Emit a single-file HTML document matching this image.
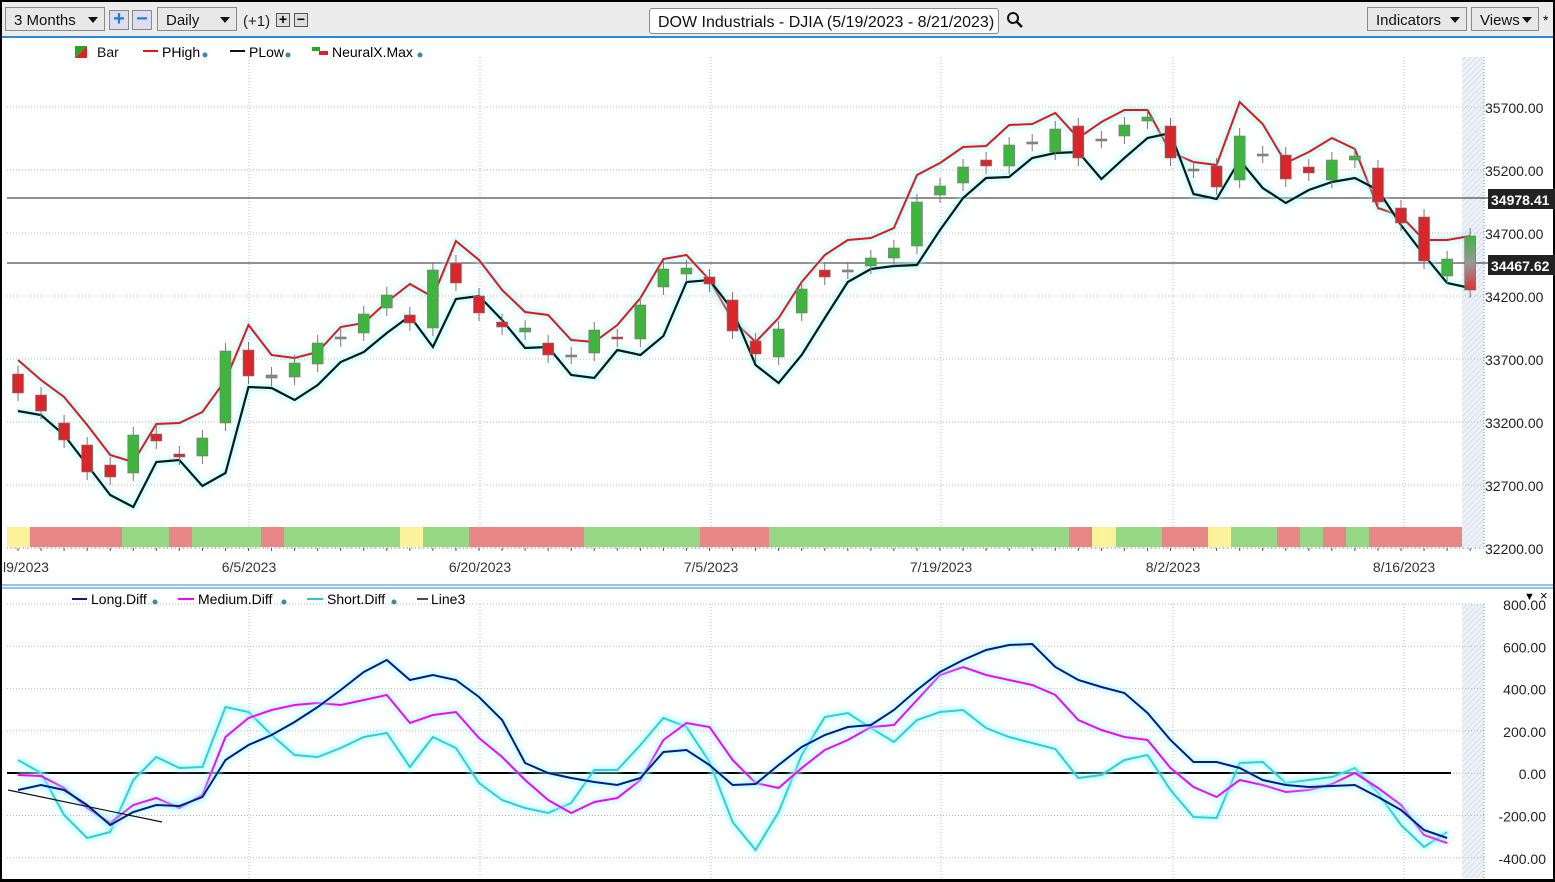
<!DOCTYPE html>
<html><head><meta charset="utf-8"><style>
*{margin:0;padding:0;box-sizing:border-box}
body{width:1555px;height:882px;background:#000;overflow:hidden;font-family:"Liberation Sans",sans-serif;position:relative}
#w{position:absolute;left:2px;top:2px;width:1551px;height:877px;background:#fff}
#tb{position:absolute;left:0;top:0;width:1551px;height:36px;background:#ececec;border-bottom:2px solid #2a8ad4}
.bx{position:absolute;top:5px;height:24px;border:1px solid #8a8a8a;background:#e8e8e8;font-size:15px;line-height:26px;padding-left:8px;color:#111}
.ar{position:absolute;right:6px;top:9px;width:0;height:0;border-left:5px solid transparent;border-right:5px solid transparent;border-top:6px solid #111}
.pm{position:absolute;top:8px;width:20px;height:20px;border:1px solid #8a8a8a;background:#dde;color:#1f7fd0;font-weight:bold;font-size:20px;line-height:17px;text-align:center}
.sm{position:absolute;top:11px;width:14px;height:14px;border:1px solid #555;background:#ddd;font-size:14px;line-height:11px;text-align:center;font-weight:bold}
svg text{font-family:"Liberation Sans",sans-serif}
</style></head><body><div id="w">
<div id="tb">
<div class="bx" style="left:3px;width:100px">3 Months<div class="ar"></div></div>
<div class="pm" style="left:107px">+</div><div class="pm" style="left:130px">−</div>
<div class="bx" style="left:155px;width:80px">Daily<div class="ar"></div></div>
<div style="position:absolute;left:241px;top:11px;font-size:15px;color:#222">(+1)</div>
<div class="sm" style="left:274px">+</div><div class="sm" style="left:292px">−</div>
<div class="bx" style="left:647px;width:350px;background:#fff;border-radius:3px;padding-left:8px;top:6px;height:26px;line-height:28px;font-size:16px">DOW Industrials - DJIA (5/19/2023 - 8/21/2023)</div>
<svg style="position:absolute;left:1004px;top:9px" width="18" height="18"><circle cx="7" cy="7" r="5" fill="none" stroke="#111" stroke-width="2"/><line x1="11" y1="11" x2="16" y2="16" stroke="#111" stroke-width="2.5"/></svg>
<div class="bx" style="left:1365px;width:100px">Indicators<div class="ar"></div></div>
<div class="bx" style="left:1469px;width:68px">Views<div class="ar"></div></div>
<div style="position:absolute;left:1541px;top:10px;font-size:14px">*</div>
</div>
<svg id="s" style="position:absolute;left:-2px;top:-2px" width="1555" height="882"></svg>
</div>
<script>
const s=document.getElementById('s');let h='';
const X=i=>18+23.05*i;
const gx=[249,480,711,941,1173,1404];
h+='<defs><pattern id="hp" width="4" height="4" patternUnits="userSpaceOnUse" patternTransform="rotate(45)"><rect width="4" height="4" fill="#eef2f6"/><line x1="0" y1="0" x2="0" y2="4" stroke="#d8e0ea" stroke-width="2"/></pattern><filter id="gl" x="-5%" y="-20%" width="110%" height="140%"><feGaussianBlur stdDeviation="2.5"/></filter></defs>';
h+='<rect x="1462" y="57" width="22" height="490" fill="url(#hp)"/><rect x="1462" y="604" width="22" height="274" fill="url(#hp)"/>';
h+='<line x1="1484" y1="57" x2="1484" y2="548" stroke="#5a9ad8" stroke-dasharray="1,2"/><line x1="1484" y1="604" x2="1484" y2="878" stroke="#5a9ad8" stroke-dasharray="1,2"/>';
for(const x of gx){h+=`<line x1="${x}" y1="57" x2="${x}" y2="548" stroke="#bbb" stroke-dasharray="1,2"/><line x1="${x}" y1="604" x2="${x}" y2="878" stroke="#bbb" stroke-dasharray="1,2"/>`;}
for(let k=0;k<8;k++){const y=107+63*k;h+=`<line x1="7" y1="${y}" x2="1484" y2="${y}" stroke="#bbb" stroke-dasharray="1,2"/>`;h+=`<text x="1485" y="${y+6}" font-size="14" fill="#222">${35700-500*k}.00</text>`;}
const lv=['800.00','600.00','400.00','200.00','0.00','-200.00','-400.00'];
for(let k=0;k<7;k++){const y=604+42.3*k;h+=`<line x1="7" y1="${y}" x2="1484" y2="${y}" stroke="#bbb" stroke-dasharray="1,2"/>`;h+=`<text x="1546" y="${y+6}" font-size="14" fill="#222" text-anchor="end">${lv[k]}</text>`;}
const st=[[7,30,'#fcf29a'],[30,122,'#e88686'],[122,169,'#96d784'],[169,192,'#e88686'],[192,261,'#96d784'],[261,284,'#e88686'],[284,400,'#96d784'],[400,423,'#fcf29a'],[423,469,'#96d784'],[469,584,'#e88686'],[584,700,'#96d784'],[700,769,'#e88686'],[769,1069,'#96d784'],[1069,1092,'#e88686'],[1092,1116,'#fcf29a'],[1116,1162,'#96d784'],[1162,1208,'#e88686'],[1208,1231,'#fcf29a'],[1231,1277,'#96d784'],[1277,1300,'#e88686'],[1300,1323,'#96d784'],[1323,1346,'#e88686'],[1346,1369,'#96d784'],[1369,1462,'#e88686']];
for(const [a,b,c] of st)h+=`<rect x="${a}" y="527" width="${b-a}" height="20" fill="${c}"/>`;
h+='<line x1="7" y1="548" x2="1484" y2="548" stroke="#888" stroke-dasharray="1,3"/>';
for(let i=0;i<64;i++)h+=`<line x1="${X(i)}" y1="548" x2="${X(i)}" y2="551" stroke="#555"/>`;
const dl=[[249,'6/5/2023'],[480,'6/20/2023'],[711,'7/5/2023'],[941,'7/19/2023'],[1173,'8/2/2023'],[1404,'8/16/2023']];
h+='<text x="3" y="572" font-size="14" fill="#333">l9/2023</text>';
for(const [x,t] of dl)h+=`<text x="${x}" y="572" font-size="14" fill="#333" text-anchor="middle">${t}</text>`;
h+='<line x1="2" y1="585" x2="1553" y2="585" stroke="#2a8ad4"/><line x1="2" y1="588" x2="1553" y2="588" stroke="#2a8ad4"/>';
h+='<line x1="7" y1="198" x2="1488" y2="198" stroke="#222"/><line x1="7" y1="263" x2="1488" y2="263" stroke="#222"/>';
h+='<rect x="1488" y="189" width="67" height="20" fill="#222"/><text x="1491" y="205" font-size="14" font-weight="bold" fill="#fff">34978.41</text>';
h+='<rect x="1488" y="255" width="67" height="20" fill="#222"/><text x="1491" y="271" font-size="14" font-weight="bold" fill="#fff">34467.62</text>';
const ph=[360,380,397,425,455,462,424,423,412,380,325,355,358,352,327,323,302,284,297,241,260,290,312,315,340,342,325,298,259,255,280,320,342,318,282,255,240,238,228,175,163,147,146,125,124,113,138,122,110,110,152,162,165,102,124,163,152,138,149,208,216,240,240,236];
const pl=[411,415,435,465,495,507,462,460,486,473,387,388,400,385,362,352,333,316,347,299,296,320,348,347,375,378,350,355,336,282,280,310,365,383,355,318,282,269,266,265,230,198,178,177,158,153,152,179,158,138,133,194,199,160,188,203,190,182,178,190,225,255,283,288];
const P=a=>a.map((y,i)=>X(i).toFixed(1)+','+y).join(' ');
const line=(a,c,w)=>`<polyline points="${P(a)}" fill="none" stroke="#9ff" stroke-width="7" opacity=".55" filter="url(#gl)"/><polyline points="${P(a)}" fill="none" stroke="${c}" stroke-width="${w}"/>`;
const cd=[['r',374,393],['r',395,411],['r',423,440],['r',445,472],['r',465,477],['g',435,473],['r',434,441],['r',454,457],['g',438,456],['g',351,423],['r',350,376],['n',375,378],['g',363,377],['g',343,364],['n',337,339],['g',314,333],['g',295,308],['r',315,323],['g',270,328],['r',263,283],['r',296,313],['r',322,327],['g',328,332],['r',343,355],['n',355,356],['g',330,353],['r',337,339],['g',305,339],['g',269,287],['g',268,274],['r',277,284],['r',300,331],['r',341,354],['g',329,357],['g',289,313],['r',270,277],['n',270,271],['g',258,266],['g',248,258],['g',202,246],['g',186,195],['g',167,183],['r',160,166],['g',145,166],['n',142,143],['g',129,152],['r',126,158],['n',139,140],['g',125,136],['g',117,121],['r',126,158],['n',169,170],['r',166,187],['g',136,180],['n',154,155],['r',155,179],['r',167,173],['g',160,180],['g',156,160],['r',168,202],['r',208,223],['r',217,261],['g',259,276],['x',236,290]];
h+=line(ph,'#e8141a',2)+line(pl,'#0a1a1a',2.2);
h+='<linearGradient id="gg" x1="0" y1="0" x2="0" y2="1"><stop offset="0" stop-color="#3fb53f"/><stop offset=".5" stop-color="#999"/><stop offset="1" stop-color="#d33"/></linearGradient>';
cd.forEach(([c,t,b],i)=>{const x=X(i);const f=c=='g'?'#3fb53f':c=='r'?'#d9262b':c=='x'?'url(#gg)':'#888';
h+=`<line x1="${x}" y1="${t-8}" x2="${x}" y2="${b+8}" stroke="#777"/>`;
h+=`<rect x="${x-5.5}" y="${t}" width="11" height="${Math.max(b-t,2)}" fill="${f}" stroke="#777" stroke-width=".6"/>`;});
h+='<polygon points="75,46 87,46 75,58" fill="#2a2"/><polygon points="87,46 87,58 75,58" fill="#d22"/><text x="97" y="57" font-size="14" fill="#111">Bar</text>';
h+='<line x1="143" y1="51" x2="158" y2="51" stroke="#e8141a" stroke-width="2"/><text x="162" y="57" font-size="14">PHigh</text><circle cx="205" cy="55" r="2.5" fill="#3a8aa8"/>';
h+='<line x1="230" y1="51" x2="245" y2="51" stroke="#111" stroke-width="2"/><text x="249" y="57" font-size="14">PLow</text><circle cx="288" cy="55" r="2.5" fill="#3a8aa8"/>';
h+='<rect x="312" y="47" width="8" height="4" fill="#2a2"/><rect x="319" y="51" width="9" height="4" fill="#d22"/><text x="332" y="57" font-size="14">NeuralX.Max</text><circle cx="420" cy="55" r="2.5" fill="#3a8aa8"/>';
h+='<line x1="72" y1="599" x2="87" y2="599" stroke="#0a1a8a" stroke-width="2"/><text x="91" y="604" font-size="14">Long.Diff</text><circle cx="155" cy="602" r="2.5" fill="#3a8aa8"/>';
h+='<line x1="178" y1="599" x2="194" y2="599" stroke="#f0f" stroke-width="2"/><text x="198" y="604" font-size="14">Medium.Diff</text><circle cx="284" cy="602" r="2.5" fill="#3a8aa8"/>';
h+='<line x1="307" y1="599" x2="323" y2="599" stroke="#2cc" stroke-width="2"/><text x="327" y="604" font-size="14">Short.Diff</text><circle cx="394" cy="602" r="2.5" fill="#3a8aa8"/>';
h+='<line x1="417" y1="599" x2="428" y2="599" stroke="#111" stroke-width="1.5"/><text x="431" y="604" font-size="14">Line3</text>';
h+='<text x="1524" y="600" font-size="11">▼</text><text x="1540" y="600" font-size="13">×</text>';
h+='<line x1="7" y1="773" x2="1451" y2="773" stroke="#000" stroke-width="2"/>';
const lg=[790,785,790,805,825,812,805,806,797,760,745,735,722,707,690,672,660,680,675,680,697,720,763,773,778,782,785,778,752,750,765,785,784,765,747,735,727,725,710,690,672,660,650,645,644,667,680,687,693,713,740,762,762,768,780,785,787,786,785,797,810,830,838];
const md=[775,776,788,808,823,805,798,808,795,737,718,710,705,703,705,700,695,723,715,712,738,757,780,800,813,802,798,780,740,723,727,760,783,788,768,750,740,727,725,700,675,667,675,680,685,695,720,730,737,740,768,787,797,780,785,792,790,784,773,788,805,835,843];
const sh=[760,773,815,838,832,780,757,768,767,707,712,735,755,757,748,737,733,767,737,748,783,800,808,813,803,770,770,745,718,727,762,822,850,812,755,717,713,728,742,720,712,710,728,737,743,749,778,775,760,755,790,817,818,763,762,783,780,777,768,793,825,847,832];
h+=line(sh,'#2dd0d8',2)+line(md,'#f0f',2)+line(lg,'#0a1a8a',2);
h+='<line x1="8" y1="790" x2="162" y2="822" stroke="#111" stroke-width="1.2"/>';
s.innerHTML=h;
</script>
</body></html>
